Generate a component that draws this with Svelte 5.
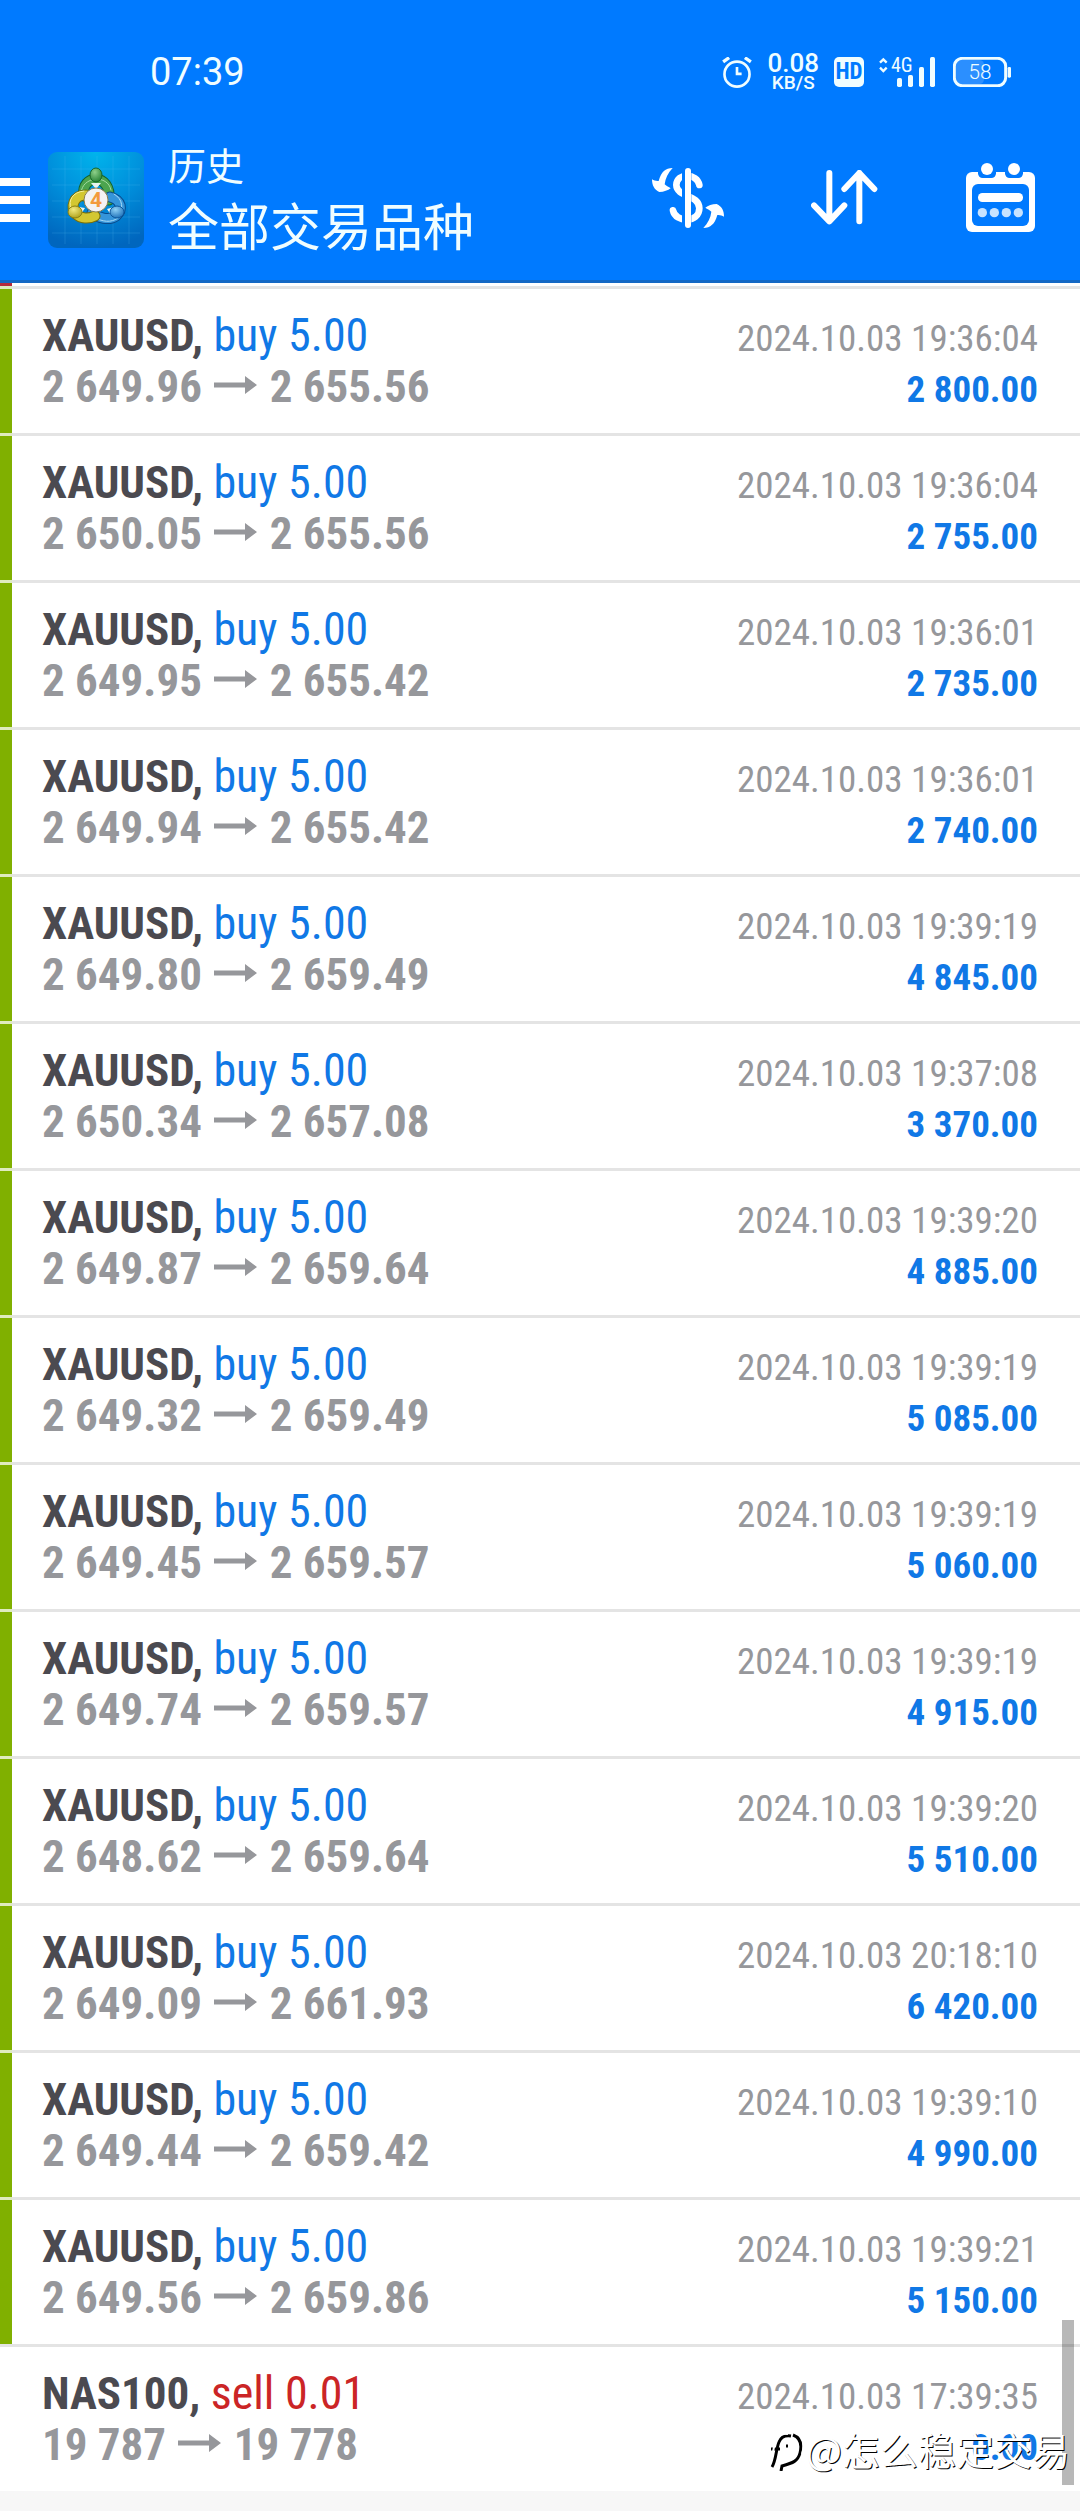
<script lang="ts">
  type Deal = {
    symbol: string;
    side: "buy" | "sell";
    volume: string;
    open: string;
    close: string;
    time: string;
    profit: string;
  };

  const gold = (open: string, close: string, time: string, profit: string): Deal => ({
    symbol: "XAUUSD",
    side: "buy",
    volume: "5.00",
    open,
    close,
    time: `2024.10.03 ${time}`,
    profit,
  });

  const deals: Deal[] = [
    gold("2 649.96", "2 655.56", "19:36:04", "2 800.00"),
    gold("2 650.05", "2 655.56", "19:36:04", "2 755.00"),
    gold("2 649.95", "2 655.42", "19:36:01", "2 735.00"),
    gold("2 649.94", "2 655.42", "19:36:01", "2 740.00"),
    gold("2 649.80", "2 659.49", "19:39:19", "4 845.00"),
    gold("2 650.34", "2 657.08", "19:37:08", "3 370.00"),
    gold("2 649.87", "2 659.64", "19:39:20", "4 885.00"),
    gold("2 649.32", "2 659.49", "19:39:19", "5 085.00"),
    gold("2 649.45", "2 659.57", "19:39:19", "5 060.00"),
    gold("2 649.74", "2 659.57", "19:39:19", "4 915.00"),
    gold("2 648.62", "2 659.64", "19:39:20", "5 510.00"),
    gold("2 649.09", "2 661.93", "20:18:10", "6 420.00"),
    gold("2 649.44", "2 659.42", "19:39:10", "4 990.00"),
    gold("2 649.56", "2 659.86", "19:39:21", "5 150.00"),
    {
      symbol: "NAS100",
      side: "sell",
      volume: "0.01",
      open: "19 787",
      close: "19 778",
      time: "2024.10.03 17:39:35",
      profit: "0.00",
    },
  ];
</script>

<div class="app">
  <header>
    <div class="status">
      <time class="clock">07:39</time>
      <svg class="alarm" viewBox="24 36 90 94" fill="none" stroke="currentColor" stroke-width="8">
        <circle cx="69" cy="88" r="38" />
        <path d="M69 66v21h14" />
        <path d="M27 51l18-13M93 38l18 13" stroke-width="10" />
      </svg>
      <div class="speed">
        <span class="rate">0.08</span>
        <span class="unit">KB/S</span>
      </div>
      <span class="hd">HD</span>
      <svg class="signal" viewBox="0 0 168 90" fill="currentColor">
        <path
          d="M3 17l10-10 10 10M3 32l10 10 10-10"
          fill="none"
          stroke="currentColor"
          stroke-width="7"
        />
        <text x="36" y="44" font-size="60">4G</text>
        <rect x="54" y="63" width="15" height="27" rx="5" />
        <rect x="87" y="54" width="15" height="36" rx="5" />
        <rect x="120" y="30" width="15" height="60" rx="5" />
        <rect x="153" y="0" width="15" height="90" rx="5" />
      </svg>
      <svg class="battery" viewBox="0 0 174 90">
        <rect x="9" y="9" width="84" height="72" rx="14" fill="#2b8fff" />
        <rect
          x="4"
          y="4"
          width="154"
          height="82"
          rx="24"
          fill="none"
          stroke="currentColor"
          stroke-width="9"
        />
        <rect x="164" y="30" width="10" height="32" rx="4" fill="currentColor" />
        <text x="81" y="67" font-size="62" text-anchor="middle" fill="currentColor">58</text>
      </svg>
    </div>

    <div class="toolbar">
      <button class="menu" aria-label="菜单">
        <span></span>
        <span></span>
        <span></span>
      </button>
      <svg class="logo" viewBox="0 0 96 96">
        <defs>
          <radialGradient id="sky" cx="0.5" cy="0" r="1">
            <stop offset="0" stop-color="#00b4ec" />
            <stop offset="0.5" stop-color="#0090dc" />
            <stop offset="1" stop-color="#0066be" />
          </radialGradient>
          <radialGradient id="green" cx="0.4" cy="0.3" r="0.8">
            <stop offset="0" stop-color="#8ed08a" />
            <stop offset="1" stop-color="#1d7a2c" />
          </radialGradient>
          <radialGradient id="yellow" cx="0.4" cy="0.3" r="0.8">
            <stop offset="0" stop-color="#f3ea80" />
            <stop offset="1" stop-color="#a89a10" />
          </radialGradient>
          <radialGradient id="blue" cx="0.4" cy="0.3" r="0.8">
            <stop offset="0" stop-color="#8fd0f5" />
            <stop offset="1" stop-color="#1268b4" />
          </radialGradient>
        </defs>
        <rect width="96" height="96" rx="9" fill="url(#sky)" />
        <path
          d="M17 4v88M33 4v88M49 4v88M65 4v88M81 4v88M4 17h88M4 33h88M4 49h88M4 65h88M4 81h88"
          stroke="#5cc4f4"
          stroke-opacity="0.2"
        />
        <g fill="none" stroke-linecap="round">
          <path d="M36 44C32 22 64 20 61 48" stroke="#14602a" stroke-width="11" />
          <path d="M36 44C32 22 64 20 61 48" stroke="#4ca44e" stroke-width="9" />
          <path d="M33 41C34 24 60 22 63 38" stroke="#a5dba0" stroke-width="1" />
          <path d="M62 45c12 3 13 13 6 19-7 5-18 2-24-3" stroke="#084a8c" stroke-width="11" />
          <path d="M62 45c12 3 13 13 6 19-7 5-18 2-24-3" stroke="#3595da" stroke-width="9" />
          <path d="M66 42c9 5 10 15 4 24-7 5-16 4-24-1" stroke="#a8dcf8" stroke-width="1" />
          <path d="M38 43c-13 0-16 13-10 19 5 5 13 5 19 2" stroke="#77700c" stroke-width="11" />
          <path d="M38 43c-13 0-16 13-10 19 5 5 13 5 19 2" stroke="#d3c731" stroke-width="9" />
          <path d="M36 39c-12 1-16 10-13 17" stroke="#f6f1a0" stroke-width="1" />
        </g>
        <path d="M43 31h10l-5 6zM31 55l6 1-4 6zM66 55l-7 2 4 6z" fill="#e8f4f0" />
        <ellipse cx="48" cy="23" rx="6" ry="7" fill="url(#green)" stroke="#17662a" />
        <ellipse cx="27" cy="60" rx="7" ry="6" fill="url(#yellow)" stroke="#8b8010" />
        <ellipse cx="69" cy="60" rx="7" ry="6" fill="url(#blue)" stroke="#0c569c" />
        <circle cx="48" cy="48" r="12" fill="#f4f2f3" stroke="#8b7f50" stroke-width="1" />
        <text class="four" x="48" y="55" font-size="21" text-anchor="middle" fill="#f39a3c">4</text>
      </svg>
      <div class="titles">
        <span class="section">历史</span>
        <h1>全部交易品种</h1>
      </div>
      <button class="action" aria-label="交易品种">
        <svg width="72" height="60" viewBox="42 57 216 180">
          <path
            d="M184 108C178 72 116 70 115 108C116 146 184 136 184 178C184 222 112 222 105 184"
            fill="none"
            stroke="#fff"
            stroke-width="20"
            stroke-linecap="round"
          />
          <path class="bg" d="M132 57h28v180h-28z" />
          <rect x="141" y="57" width="18" height="180" rx="9" fill="#fff" />
          <g fill="#fff">
            <path
              d="M104 57C82 58 70 68 62 96C54 97 48 94 42 91C42 108 48 122 64 129C78 129 90 124 98 118C92 114 86 112 80 106C82 88 90 72 104 57Z"
            />
            <path
              d="M196 237C218 236 230 226 238 198C246 197 252 200 258 203C258 186 252 172 236 165C222 165 210 170 202 176C208 180 214 182 220 188C218 206 210 222 196 237Z"
            />
          </g>
        </svg>
      </button>
      <button class="action" aria-label="排序">
        <svg
          width="67"
          height="55"
          viewBox="38 65 201 165"
          fill="none"
          stroke="#fff"
          stroke-width="18"
          stroke-linecap="round"
          stroke-linejoin="round"
        >
          <path d="M93 74v145M47 171l46 48 45-48M183 219V74M138 122l45-48 45 48" />
        </svg>
      </button>
      <button class="action" aria-label="日期">
        <svg width="69" height="69" viewBox="498 39 207 207" fill="#fff">
          <rect x="498" y="66" width="207" height="180" rx="18" />
          <g class="bg">
            <rect x="534" y="48" width="54" height="36" rx="14" />
            <rect x="615" y="48" width="54" height="36" rx="14" />
            <rect x="516" y="102" width="171" height="126" rx="18" />
          </g>
          <circle cx="561" cy="57" r="18" />
          <circle cx="642" cy="57" r="18" />
          <rect x="534" y="129" width="135" height="27" rx="13" />
          <g fill="#c7e3ff">
            <circle cx="547" cy="188" r="14" />
            <circle cx="583" cy="188" r="14" />
            <circle cx="619" cy="188" r="14" />
            <circle cx="655" cy="188" r="14" />
          </g>
        </svg>
      </button>
    </div>
  </header>

  <main>
    <div class="previous"></div>
    <ul>
      {#each deals as deal}
        <li class={deal.side}>
          <div class="mark"></div>
          <div class="deal">
            <div class="line">
              <span class="name">
                <b>{deal.symbol},</b>
                <span class="type">{deal.side} {deal.volume}</span>
              </span>
              <time>{deal.time}</time>
            </div>
            <div class="line">
              <span class="prices">
                {deal.open}
                <svg class="arrow" viewBox="0 0 43 18">
                  <path d="M0 6.500h31V0l12 9-12 9v-6.500H0z" fill="currentColor" />
                </svg>
                {deal.close}
              </span>
              <span class="profit">{deal.profit}</span>
            </div>
          </div>
        </li>
      {/each}
    </ul>
    <div class="scrollbar"></div>
    <div class="watermark">
      <svg width="36" height="44" viewBox="0 0 36 44" fill="none">
        <g stroke="#000" stroke-width="3">
          <path d="M5 40c4-6 4-18 7-25 2-5 6-7 12-6M4 22h9" />
          <path d="M26 8c8 3 9 10 7 18-2 8-7 10-18 13l-1 5M19 19h2" />
        </g>
        <path
          d="M2 38c4-6 4-18 7-25 2-5 6-7 12-6M29 6c8 3 9 12 6 21"
          stroke="#fff"
          stroke-width="2"
        />
      </svg>
      <span>@怎么稳定交易</span>
    </div>
  </main>
</div>

<style>
  :global(body) {
    margin: 0;
    background: #f7f7f7;
  }

  .app {
    font-family: "Roboto Condensed", Roboto, sans-serif;
    color: #96979b;
  }

  header {
    background: #007aff;
    border-bottom: 3px solid #1468c4;
    color: #f0fdff;
  }

  .status {
    display: flex;
    align-items: center;
    height: 86px;
    padding: 29px 69px 0 150px;
    gap: 15px;
  }
  .clock {
    margin-right: auto;
    font-family: Roboto, sans-serif;
    font-size: 38px;
  }
  .alarm {
    width: 30px;
    height: 31px;
  }
  .speed {
    display: flex;
    flex-direction: column;
    align-items: center;
    font-family: Roboto, sans-serif;
    font-weight: 500;
  }
  .rate {
    font-size: 26px;
    line-height: 22px;
  }
  .unit {
    font-size: 19px;
    line-height: 18px;
  }
  .hd {
    width: 30px;
    border-radius: 5px;
    background: #f0fdff;
    color: #007aff;
    font-size: 23px;
    font-weight: 700;
    line-height: 30px;
    text-align: center;
  }
  .signal {
    width: 56px;
    height: 30px;
    overflow: visible;
  }
  .battery {
    width: 58px;
    height: 30px;
    margin-left: 3px;
    font-family: Roboto, sans-serif;
    font-weight: 300;
  }

  .toolbar {
    display: flex;
    align-items: center;
    height: 161px;
    padding: 4px 2px 0 0;
  }
  button {
    padding: 0;
    border: 0;
    background: none;
  }
  .menu {
    display: flex;
    flex-direction: column;
    gap: 10px;
    width: 30px;
    margin-right: 18px;
  }
  .menu span {
    height: 8px;
    background: #fff;
  }
  .logo {
    width: 96px;
    height: 96px;
  }
  .four {
    font-family: Roboto, sans-serif;
    font-weight: 700;
  }
  .titles {
    display: flex;
    flex-direction: column;
    flex: 1;
    padding: 0 0 4px 24px;
    font-family: "Noto Sans CJK SC", sans-serif;
    white-space: nowrap;
  }
  .section {
    font-size: 38px;
    line-height: 52px;
  }
  h1 {
    margin: 0;
    font-size: 51px;
    font-weight: 400;
    line-height: 68px;
  }
  .action {
    display: flex;
    align-items: center;
    justify-content: center;
    width: 156px;
    height: 100%;
    padding-bottom: 4px;
  }
  .bg {
    fill: #007aff;
  }

  main {
    position: relative;
    background: #fff;
  }
  .previous {
    width: 12px;
    height: 3px;
    background: #b52a3c;
  }
  ul {
    margin: 0;
    padding: 0;
    list-style: none;
  }
  li {
    display: flex;
  }
  .mark {
    width: 12px;
    border-top: 3px solid #e4e4e4;
  }
  .buy .mark {
    border-top-color: #dfebbf;
    background: #80b000;
  }
  .deal {
    flex: 1;
    padding: 21px 42px 21px 30px;
    border-top: 3px solid #e4e4e4;
  }
  .line {
    display: flex;
    align-items: baseline;
    justify-content: space-between;
    height: 51px;
    font-size: 45px;
    line-height: 51px;
  }
  .line time,
  .profit {
    font-size: 37px;
  }
  .name b {
    color: #4b4a50;
  }
  .type {
    color: #1078e6;
    font-size: 46px;
  }
  .sell .type {
    color: #cb2526;
  }
  .prices {
    font-weight: 700;
  }
  .arrow {
    width: 43px;
    height: 18px;
    margin: 0 2px;
    vertical-align: 8px;
  }
  .profit {
    color: #1078e6;
    font-weight: 700;
  }

  .scrollbar {
    position: absolute;
    right: 6px;
    bottom: 6px;
    width: 12px;
    height: 165px;
    background: rgba(0, 0, 0, 0.28);
  }
  .watermark {
    position: absolute;
    right: 10px;
    bottom: 20px;
    display: flex;
    align-items: center;
    gap: 3px;
    color: #fff;
    font-family: "Noto Sans CJK SC", sans-serif;
    font-size: 38px;
    line-height: 44px;
    text-shadow: 1px 1px 0 #000;
  }
</style>
